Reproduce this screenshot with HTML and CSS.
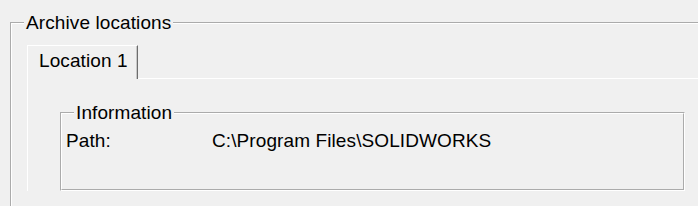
FILE: index.html
```html
<!DOCTYPE HTML>
<html>

<head>
  <title>Archive locations</title>
  <meta name="viewport" content="width=device-width, initial-scale=1">
  <link rel="stylesheet" href="styles.css">
</head>

<body>
  <fieldset class="group archive">
    <legend>Archive locations</legend>
    <div class="tabs">
      <div class="tab active">Location 1</div>
    </div>
    <div class="tab-pane">
      <fieldset class="group info">
        <legend>Information</legend>
        <div class="row">
          <span class="label">Path:</span>
          <span class="value">C:\Program Files\SOLIDWORKS</span>
        </div>
      </fieldset>
    </div>
  </fieldset>
</body>

</html>
```

FILE: styles.css
```css
html,
body {
  margin: 0;
  overflow: hidden;
}

body {
  background-color: #f0f0f0;
  color: #000;
  font-family: "Liberation Sans", Arial, sans-serif;
  font-size: 19px;
  line-height: normal;
  letter-spacing: 0.1px;
}

.group {
  border: 2px groove #fff;
  margin: 0;
  min-width: 0;

  & legend {
    padding: 0 2px;
  }
}

.archive {
  margin: 12px -40px 0 10px;
  padding: 11px 0 60px 12px;
}

.tabs {
  display: flex;
  margin-left: 3px;
}

.tab {
  padding: 4px 9px 7px 11px;
  border-top: 1px solid #fff;
  border-left: 1px solid #fff;
  border-right: 1px solid #6d6d6d;
  box-shadow: inset -1px 0 0 #c8c8c8;
  background: #f0f0f0;
  margin-bottom: -1px;
  position: relative;
}

.tab-pane {
  margin-left: 3px;
  border-top: 1px solid #fff;
  border-left: 1px solid #fff;
  padding: 23px 0 0 32px;
}

.info {
  width: 625px;
  box-sizing: border-box;
  padding: 6px 0 37px 4px;

  & legend {
    margin-left: 8px;
  }
}

.row {
  display: grid;
  grid-template-columns: 146px 1fr;
}
```
